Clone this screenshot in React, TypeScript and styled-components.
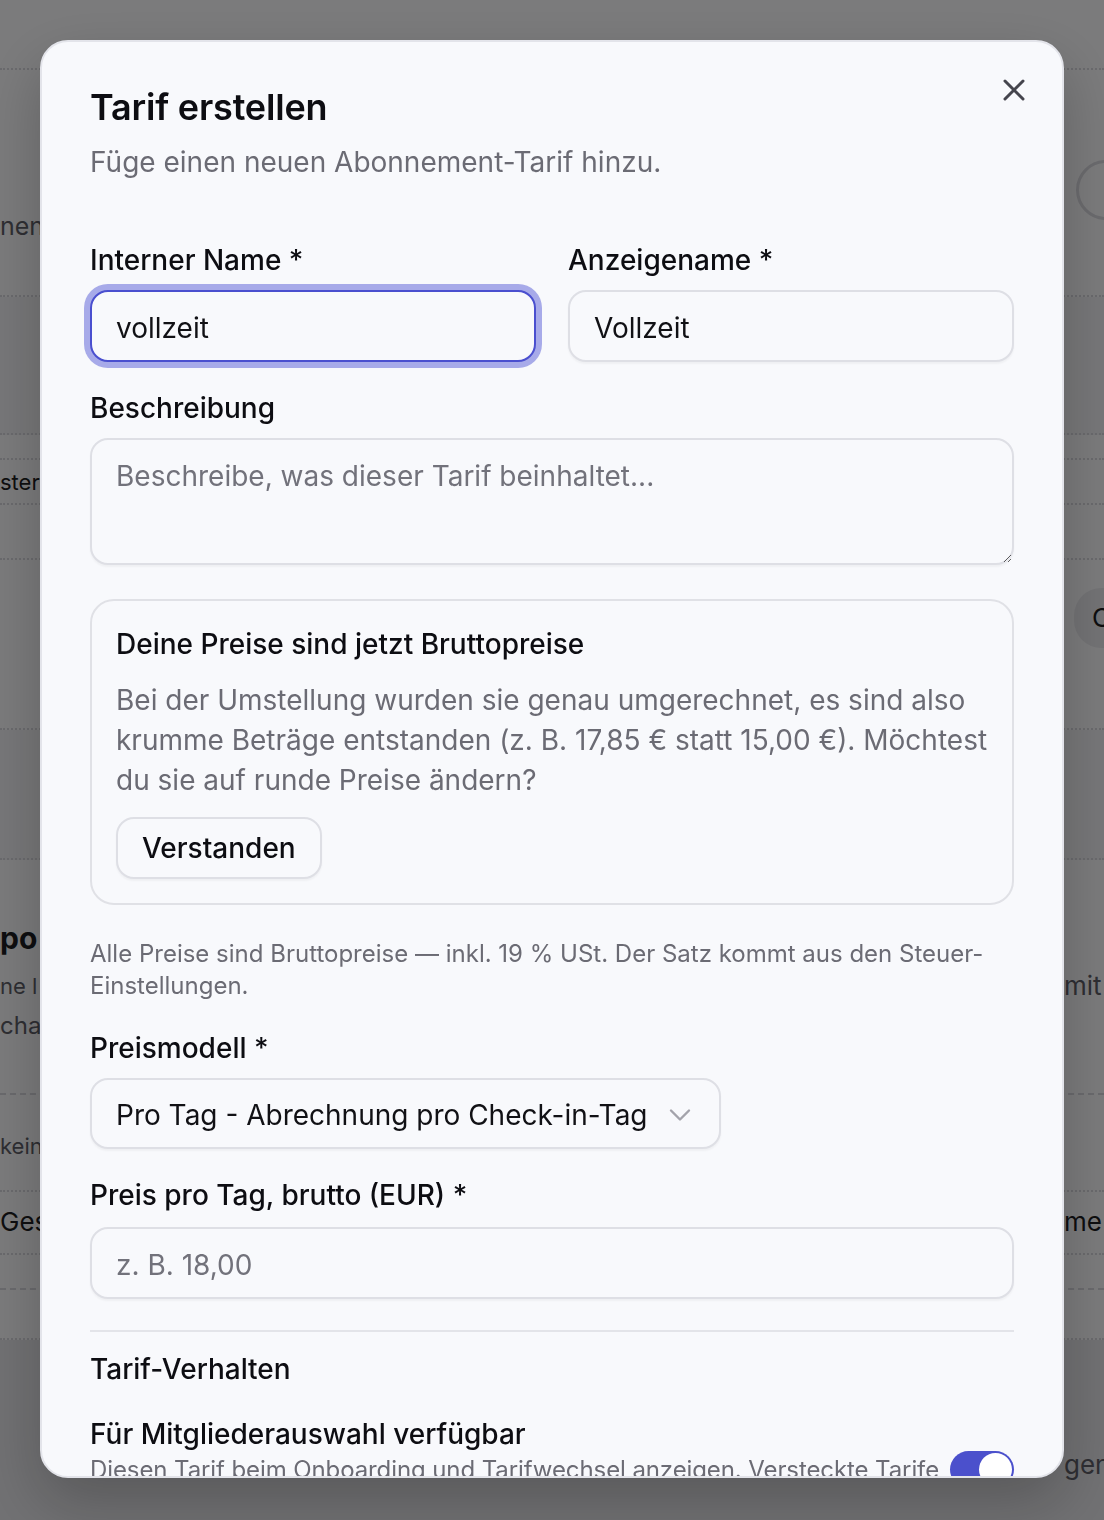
import styled, { createGlobalStyle } from "styled-components";
import { X, ChevronDown } from "lucide-react";

const GlobalStyle = createGlobalStyle`
  * {
    box-sizing: border-box;
  }

  html,
  body {
    margin: 0;
    padding: 0;
  }

  body {
    width: 1104px;
    height: 1520px;
    overflow: hidden;
    font-family: Inter, "Noto Sans", "Liberation Sans", sans-serif;
    background: #f6f6f8;
    -webkit-font-smoothing: antialiased;
  }
`;

/* ---------- page behind the dialog ---------- */

const Page = styled.div`
  display: flex;
  flex-direction: column;
  height: 1520px;
  overflow: hidden;
  background: #f7f7f9;
  color: #1c1c21;
  font-size: 26px;
  line-height: 40px;
`;

const BgRow = styled.div<{ $h: number; $line?: "solid" | "dashed" | "dotted"; $tint?: boolean }>`
  flex-shrink: 0;
  display: grid;
  grid-template-columns: 40px 1fr 40px;
  align-items: start;
  height: ${({ $h }) => $h}px;
  background: ${({ $tint }) => ($tint ? "#efeff2" : "transparent")};
  border-bottom: ${({ $line }) => ($line ? `2px ${$line} #d4d4da` : "none")};
`;

const BgCell = styled.div<{ $pt?: number; $muted?: boolean; $size?: number }>`
  padding-top: ${({ $pt }) => $pt ?? 0}px;
  white-space: nowrap;
  overflow: hidden;
  font-size: ${({ $size }) => ($size ? `${$size}px` : "inherit")};
  color: ${({ $muted }) => ($muted ? "#5d5d66" : "#1c1c21")};
`;

const BgHeading = styled.div<{ $size?: number; $weight?: number }>`
  font-size: ${({ $size }) => $size ?? 36}px;
  font-weight: ${({ $weight }) => $weight ?? 700};
  line-height: 44px;
`;

const BgLine = styled.div<{ $muted?: boolean; $size?: number }>`
  font-size: ${({ $size }) => ($size ? `${$size}px` : "inherit")};
  color: ${({ $muted }) => ($muted ? "#5d5d66" : "#1c1c21")};
  line-height: 40px;
`;

const BgCircle = styled.div`
  width: 60px;
  height: 60px;
  margin-left: 12px;
  border-radius: 50%;
  border: 3px solid #d6d6dc;
`;

const BgPill = styled.div`
  display: inline-flex;
  align-items: center;
  height: 60px;
  margin-left: 10px;
  padding: 0 18px;
  border-radius: 30px;
  background: #e6e6ea;
`;

const Bottom = styled.div`
  flex: 1;
  display: grid;
  grid-template-columns: 40px 1fr 40px;
  background: #e2e2e6;
`;

/* ---------- dialog ---------- */

const Overlay = styled.div`
  position: fixed;
  inset: 0;
  background: rgba(0, 0, 0, 0.5);
`;

const Dialog = styled.div`
  position: fixed;
  top: 40px;
  left: 40px;
  width: 1024px;
  height: 1438px;
  overflow: hidden;
  background: #f8f9fc;
  border: 2px solid #e3e4ea;
  border-radius: 28px;
  box-shadow: 0 24px 60px rgba(0, 0, 0, 0.22);
  color: #0d0d12;
`;

const CloseButton = styled.button`
  position: absolute;
  top: 30px;
  right: 30px;
  display: flex;
  align-items: center;
  justify-content: center;
  width: 36px;
  height: 36px;
  padding: 0;
  border: none;
  background: none;
  color: #45454d;
  cursor: pointer;
`;

const Body = styled.div`
  display: flex;
  flex-direction: column;
  padding: 41px 48px 48px;
`;

const Title = styled.h2`
  margin: 0;
  font-size: 36px;
  font-weight: 600;
  line-height: 48px;
  letter-spacing: -0.005em;
`;

const Subtitle = styled.p`
  margin: 11px 0 0;
  font-size: 28px;
  line-height: 40px;
  color: #6b6b74;
`;

const Form = styled.div`
  display: flex;
  flex-direction: column;
  gap: 26px;
  margin-top: 58px;
`;

const TwoCol = styled.div`
  display: grid;
  grid-template-columns: 1fr 1fr;
  gap: 32px;
`;

const Field = styled.div<{ $gap?: number }>`
  display: flex;
  flex-direction: column;
  gap: ${({ $gap }) => $gap ?? 10}px;
`;

const Label = styled.label`
  font-size: 28px;
  font-weight: 500;
  line-height: 40px;
  color: #0d0d12;
`;

const controlBase = `
  width: 100%;
  border: 2px solid #dedfe5;
  border-radius: 18px;
  background: #f8f9fc;
  font-family: Inter, "Noto Sans", "Liberation Sans", sans-serif;
  font-size: 28px;
  color: #111115;
  box-shadow: 0 2px 2px rgba(0, 0, 0, 0.04);
  outline: none;

  &::placeholder {
    color: #72727b;
  }
`;

const Input = styled.input<{ $focused?: boolean }>`
  ${controlBase}
  height: 72px;
  padding: 4px 24px 0;
  ${({ $focused }) =>
    $focused &&
    `
    border-color: #4a4fcf;
    box-shadow: 0 0 0 6px rgba(86, 92, 214, 0.5);
  `}
`;

const TextArea = styled.textarea`
  ${controlBase}
  display: block;
  height: 127px;
  padding: 16px 24px;
  line-height: 40px;
  resize: vertical;
`;

const InfoBox = styled.div`
  margin-top: 8px;
  padding: 23px 24px 24px;
  border: 2px solid #e0e1e6;
  border-radius: 24px;
`;

const InfoTitle = styled.div`
  font-size: 28px;
  font-weight: 500;
  line-height: 40px;
`;

const InfoText = styled.p`
  margin: 16px 0 0;
  font-size: 28px;
  line-height: 40px;
  color: #6b6b74;
`;

const OutlineButton = styled.button`
  height: 62px;
  margin-top: 17px;
  padding: 0 24px;
  border: 2px solid #dedfe5;
  border-radius: 18px;
  background: #f8f9fc;
  box-shadow: 0 2px 2px rgba(0, 0, 0, 0.04);
  font-family: inherit;
  font-size: 28px;
  font-weight: 500;
  color: #0d0d12;
  cursor: pointer;
`;

const Hint = styled.p`
  margin: 7px 0 0;
  font-size: 24px;
  line-height: 32px;
  color: #6b6b74;
`;

const SelectTrigger = styled.button`
  ${controlBase}
  display: flex;
  align-items: center;
  justify-content: space-between;
  width: 631px;
  height: 71px;
  padding: 2px 21px 0 24px;
  text-align: left;
  cursor: pointer;

  svg {
    color: #a3a3ab;
    flex-shrink: 0;
  }
`;

const Section = styled.div`
  display: flex;
  flex-direction: column;
  gap: 25px;
  margin-top: 5px;
  padding-top: 17px;
  border-top: 2px solid #e3e4e9;
`;

const SectionTitle = styled.div`
  font-size: 28px;
  font-weight: 500;
  line-height: 40px;
`;

const ToggleRow = styled.div`
  display: flex;
  align-items: center;
`;

const ToggleText = styled.div`
  flex: 1;
  min-width: 0;
`;

const ToggleTitle = styled.div`
  font-size: 28px;
  font-weight: 500;
  line-height: 40px;
`;

const ToggleDesc = styled.div`
  font-size: 24px;
  line-height: 32px;
  letter-spacing: -0.1px;
  color: #6b6b74;
`;

const Switch = styled.button<{ $on?: boolean }>`
  flex-shrink: 0;
  display: flex;
  align-items: center;
  justify-content: ${({ $on }) => ($on ? "flex-end" : "flex-start")};
  width: 64px;
  height: 37px;
  margin-top: 6px;
  padding: 2px;
  border: none;
  border-radius: 999px;
  background: ${({ $on }) => ($on ? "#4b50cc" : "#d4d4da")};
  cursor: pointer;
`;

const Thumb = styled.span`
  width: 33px;
  height: 33px;
  border-radius: 50%;
  background: #ffffff;
`;

function BackgroundPage() {
  return (
    <Page>
      <BgRow $h={70} $line="dotted" />
      <BgRow $h={227} $line="dotted">
        <BgCell $pt={134} $muted>
          <BgHeading $size={25} $weight={400}>nen</BgHeading>
        </BgCell>
        <div />
        <BgCell $pt={90}>
          <BgCircle />
        </BgCell>
      </BgRow>
      <BgRow $h={138} $line="dotted" $tint />
      <BgRow $h={25} $line="dotted" />
      <BgRow $h={45} $line="dotted">
        <BgCell $pt={2} $size={22}>ster</BgCell>
      </BgRow>
      <BgRow $h={55} $line="dotted" />
      <BgRow $h={170} $line="dotted">
        <div />
        <div />
        <BgCell $pt={28}>
          <BgPill>C</BgPill>
        </BgCell>
      </BgRow>
      <BgRow $h={130} $line="dotted" $tint />
      <BgRow $h={235} $line="dashed">
        <BgCell $pt={56}>
          <BgHeading $size={30}>po</BgHeading>
          <BgLine $muted $size={22} style={{ marginTop: 6 }}>ne l</BgLine>
          <BgLine $muted $size={24}>cha</BgLine>
        </BgCell>
        <div />
        <BgCell $pt={106}>
          <BgLine $muted>mit</BgLine>
        </BgCell>
      </BgRow>
      <BgRow $h={97} $line="dotted">
        <BgCell $pt={31} $muted $size={22}>kein</BgCell>
      </BgRow>
      <BgRow $h={63} $line="dotted">
        <BgCell $pt={10}>Ges</BgCell>
        <div />
        <BgCell $pt={10}>me</BgCell>
      </BgRow>
      <BgRow $h={35} $line="dashed" />
      <BgRow $h={50} $line="dotted" />
      <Bottom>
        <div />
        <div />
        <BgCell $pt={105} $muted>gen</BgCell>
      </Bottom>
    </Page>
  );
}

export default function App() {
  return (
    <>
      <GlobalStyle />
      <BackgroundPage />
      <Overlay />
      <Dialog role="dialog" aria-labelledby="tarif-title">
        <CloseButton aria-label="Schließen">
          <X size={36} strokeWidth={2} />
        </CloseButton>
        <Body>
          <Title id="tarif-title">Tarif erstellen</Title>
          <Subtitle>Füge einen neuen Abonnement-Tarif hinzu.</Subtitle>

          <Form>
            <TwoCol>
              <Field>
                <Label htmlFor="internal">Interner Name *</Label>
                <Input id="internal" defaultValue="vollzeit" $focused />
              </Field>
              <Field>
                <Label htmlFor="display">Anzeigename *</Label>
                <Input id="display" defaultValue="Vollzeit" />
              </Field>
            </TwoCol>

            <Field>
              <Label htmlFor="desc">Beschreibung</Label>
              <TextArea id="desc" placeholder="Beschreibe, was dieser Tarif beinhaltet..." />
            </Field>

            <InfoBox>
              <InfoTitle>Deine Preise sind jetzt Bruttopreise</InfoTitle>
              <InfoText>
                Bei der Umstellung wurden sie genau umgerechnet, es sind also krumme Beträge
                entstanden (z. B. 17,85 € statt 15,00 €). Möchtest du sie auf runde Preise ändern?
              </InfoText>
              <OutlineButton>Verstanden</OutlineButton>
            </InfoBox>

            <Hint>
              Alle Preise sind Bruttopreise — inkl. 19 % USt. Der Satz kommt aus den
              Steuer-Einstellungen.
            </Hint>

            <Field>
              <Label>Preismodell *</Label>
              <SelectTrigger>
                <span>Pro Tag - Abrechnung pro Check-in-Tag</span>
                <ChevronDown size={36} strokeWidth={1.6} />
              </SelectTrigger>
            </Field>

            <Field $gap={12}>
              <Label htmlFor="price">Preis pro Tag, brutto (EUR) *</Label>
              <Input id="price" placeholder="z. B. 18,00" />
            </Field>

            <Section>
              <SectionTitle>Tarif-Verhalten</SectionTitle>
              <ToggleRow>
                <ToggleText>
                  <ToggleTitle>Für Mitgliederauswahl verfügbar</ToggleTitle>
                  <ToggleDesc>
                    Diesen Tarif beim Onboarding und Tarifwechsel anzeigen. Versteckte Tarife
                    können weiterhin manuell zugewiesen werden.
                  </ToggleDesc>
                </ToggleText>
                <Switch $on aria-label="Für Mitgliederauswahl verfügbar">
                  <Thumb />
                </Switch>
              </ToggleRow>
            </Section>
          </Form>
        </Body>
      </Dialog>
    </>
  );
}
